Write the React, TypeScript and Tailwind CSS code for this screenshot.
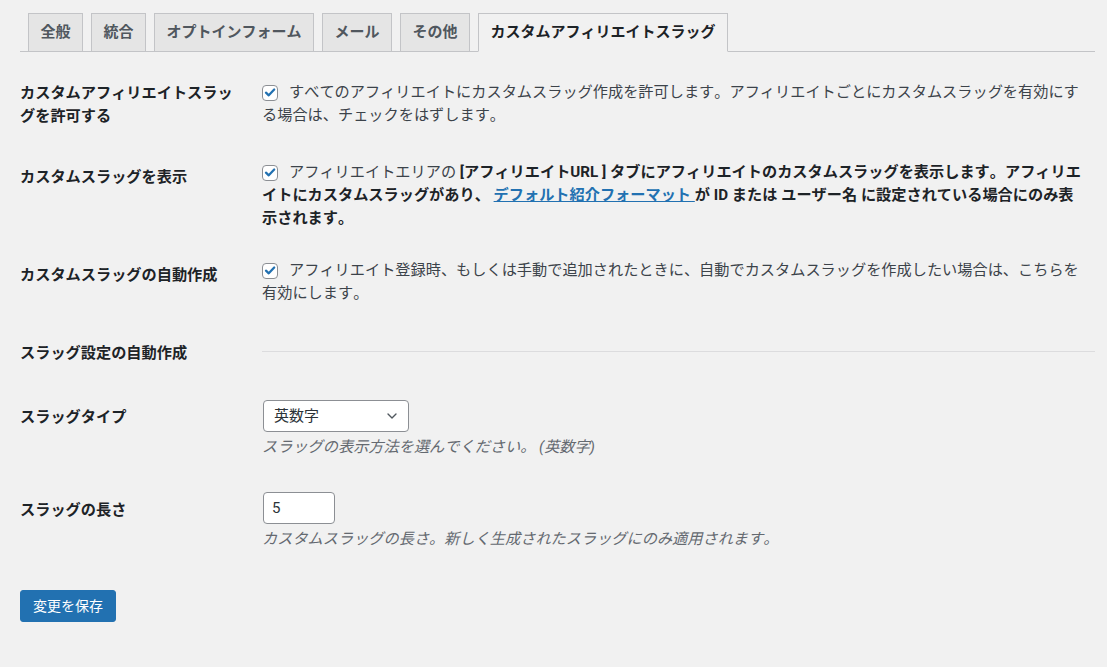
import { ChevronDown } from "lucide-react";

const tabs = ["全般", "統合", "オプトインフォーム", "メール", "その他", "カスタムアフィリエイトスラッグ"];

function Check() {
  return (
    <span className="inline-flex items-center justify-center w-4 h-4 bg-white border border-[#8c8f94] rounded-[4px] align-[-3px] mr-[11px]">
      <svg viewBox="0 0 16 16" className="w-[15px] h-[15px]">
        <path d="M3.4 8.2 L6.6 11.2 L12.8 4.6" fill="none" stroke="#2271b1" strokeWidth="2.6" strokeLinecap="round" strokeLinejoin="round" />
      </svg>
    </span>
  );
}

export default function App() {
  return (
    <div
      className="min-h-[667px] bg-[#f1f1f1] pl-5 pr-3 text-[15.2px] leading-[23px] text-[#3c434a] [font-kerning:none] [text-spacing-trim:space-all]"
      style={{ fontFamily: '"Roboto", "Noto Sans CJK JP", sans-serif' }}
    >
      {/* タブ */}
      <div className="flex gap-2 pl-2 pt-[13px] border-b border-[#c3c4c7]">
        {tabs.map((t, i) => {
          const active = i === tabs.length - 1;
          return (
            <div
              key={t}
              className={
                active
                  ? "h-[39px] -mb-px flex items-center px-[11.5px] text-[15px] font-bold border border-[#c3c4c7] border-b-[#f1f1f1] bg-[#f1f1f1] text-[#1d2327]"
                  : "h-[39px] -mb-px flex items-center px-[11.5px] text-[15px] font-bold border border-[#c3c4c7] bg-[#e5e5e5] text-[#50575e]"
              }
            >
              {t}
            </div>
          );
        })}
      </div>

      {/* カスタムアフィリエイトスラッグを許可する */}
      <div className="flex mt-[29px]">
        <div className="w-[242px] shrink-0 pt-px pr-[24px] font-bold text-[#1d2327]">カスタムアフィリエイトスラッグを許可する</div>
        <div className="flex-1 pr-[9px]">
          <Check />
          すべてのアフィリエイトにカスタムスラッグ作成を許可します。アフィリエイトごとにカスタムスラッグを有効にする場合は、チェックをはずします。
        </div>
      </div>

      {/* カスタムスラッグを表示 */}
      <div className="flex mt-[33px]">
        <div className="w-[242px] shrink-0 pt-[5px] font-bold text-[#1d2327]">カスタムスラッグを表示</div>
        <div className="flex-1 pr-[9px]">
          <Check />
          アフィリエイトエリアの{" "}
          <b className="text-[#1d2327]">
            [アフィリエイトURL ] タブにアフィリエイトのカスタムスラッグを表示します。アフィリエイトにカスタムスラッグがあり、{" "}
            <a href="#" className="text-[#2271b1] underline">
              デフォルト紹介フォーマット{" "}
            </a>{" "}
            が ID または ユーザー名 に設定されている場合にのみ表示されます。
          </b>
        </div>
      </div>

      {/* カスタムスラッグの自動作成 */}
      <div className="flex mt-[29px]">
        <div className="w-[242px] shrink-0 pt-[5px] font-bold text-[#1d2327]">カスタムスラッグの自動作成</div>
        <div className="flex-1 pr-[9px]">
          <Check />
          アフィリエイト登録時、もしくは手動で追加されたときに、自動でカスタムスラッグを作成したい場合は、こちらを有効にします。
        </div>
      </div>

      {/* スラッグ設定の自動作成 */}
      <div className="flex mt-[37px] items-center">
        <div className="w-[242px] shrink-0 font-bold text-[#1d2327]">スラッグ設定の自動作成</div>
        <div className="flex-1 -mt-[4px] border-t border-[#dcdcde]" />
      </div>

      {/* スラッグタイプ */}
      <div className="flex mt-[35px]">
        <div className="w-[242px] shrink-0 pt-[6px] font-bold text-[#1d2327]">スラッグタイプ</div>
        <div className="flex-1">
          <div className="ml-px w-[146px] h-8 flex items-center justify-between pl-[10px] pr-[8px] bg-white border border-[#8c8f94] rounded-[4px] text-[15px] text-[#2c3338]">
            <span>英数字</span>
            <ChevronDown className="w-4 h-4 text-[#50575e]" strokeWidth={2} />
          </div>
          <p className="mt-[4px] italic text-[#646970]">スラッグの表示方法を選んでください。 (英数字)</p>
        </div>
      </div>

      {/* スラッグの長さ */}
      <div className="flex mt-[33px]">
        <div className="w-[242px] shrink-0 pt-[7px] font-bold text-[#1d2327]">スラッグの長さ</div>
        <div className="flex-1">
          <div className="ml-px w-[72px] h-8 flex items-center pl-[8px] bg-white border border-[#8c8f94] rounded-[4px] text-[15px] text-[#2c3338]">
            5
          </div>
          <p className="mt-[4px] italic text-[#646970]">カスタムスラッグの長さ。新しく生成されたスラッグにのみ適用されます。</p>
        </div>
      </div>

      {/* 保存 */}
      <div className="mt-[39px] pb-10">
        <button className="h-8 w-[96px] bg-[#2271b1] text-white text-[14px] rounded-[3px] border border-[#2271b1]">
          変更を保存
        </button>
      </div>
    </div>
  );
}
